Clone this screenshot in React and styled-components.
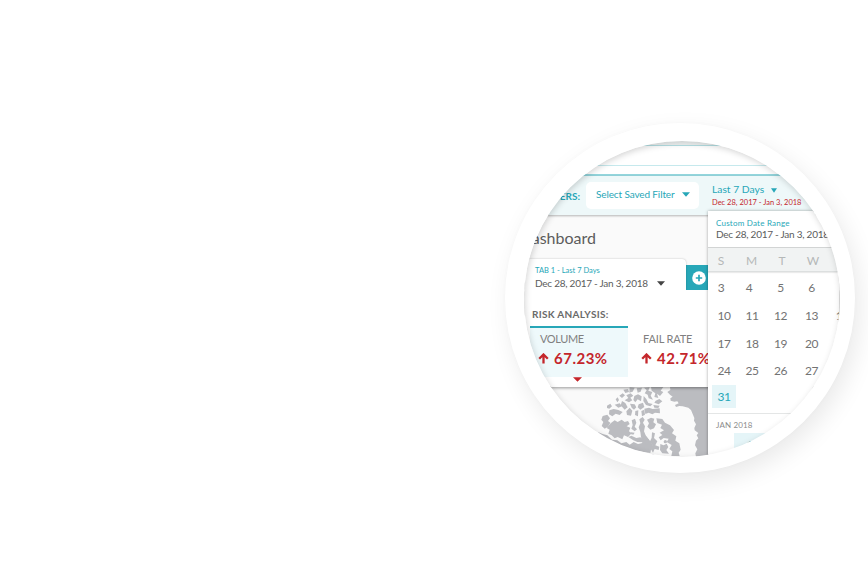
import React from "react";
import styled, { createGlobalStyle } from "styled-components";

const teal = "#27a7b8";
const red = "#c4262b";

const GlobalStyle = createGlobalStyle`
  * { box-sizing: border-box; }
  body { margin: 0; background: #fff; font-family: Lato, sans-serif; overflow: hidden; }
`;

const Page = styled.main`
  width: 868px;
  height: 567px;
  padding: 123px 0 0 505px;
  background: #fff;
  overflow: hidden;
`;

const Ring = styled.div`
  width: 350px;
  height: 350px;
  padding: 18px 0 0 19px;
  border-radius: 50%;
  background: #fff;
  box-shadow: 5px 9px 24px rgba(0, 0, 0, 0.085), 0 0 5px rgba(0, 0, 0, 0.02);
`;

const Lens = styled.div`
  position: relative;
  width: 316px;
  height: 316px;
  border-radius: 50%;
  overflow: hidden;
  background: #fafafa;
  &::after {
    content: "";
    position: absolute;
    inset: 0;
    border-radius: 50%;
    box-shadow: inset 1px 2px 6px rgba(0, 0, 0, 0.17);
  }
`;

const Text = styled.span`
  display: block;
  white-space: nowrap;
  font-size: ${(p) => p.$size}px;
  line-height: ${(p) => p.$line || 14}px;
  letter-spacing: ${(p) => p.$track || 0}px;
  font-weight: ${(p) => p.$weight || 400};
  color: ${(p) => p.$color || "#5c5c5c"};
`;

const BrowserEdge = styled.div`
  height: 5px;
  background: #eef2f2;
  border-bottom: 1px solid #b4dfe3;
`;

const NavStrip = styled.div`
  height: 20px;
  background: #fff;
  border-bottom: 1px solid #c6e9ed;
`;

const NavGap = styled.div`
  height: 10px;
  background: #fff;
  border-bottom: 2px solid #93d5dc;
`;

const FilterBar = styled.div`
  display: flex;
  height: 39px;
  background: #eef8f9;
  padding: 6px 0 0 13px;
  box-shadow: 0 1px 2px rgba(0, 0, 0, 0.28);
`;

const FiltersLabel = styled(Text)`
  display: flex;
  justify-content: flex-end;
  width: 43px;
  padding-top: 7px;
`;

const SavedFilter = styled.div`
  display: flex;
  align-items: center;
  justify-content: space-between;
  width: 113px;
  height: 27px;
  margin-left: 6px;
  padding: 0 9px 3px 10px;
  border-radius: 5px;
  background: #fff;
`;

const DateFilter = styled.div`
  padding: 0 0 0 13px;
`;

const DateFilterTop = styled.div`
  display: flex;
  align-items: center;
  gap: 7px;
  height: 14px;
  svg { margin-top: 2px; }
`;

const Heading = styled(Text)`
  width: 72px;
  height: 44px;
  padding-top: 12px;
  display: flex;
  justify-content: flex-end;
`;

const TabRow = styled.div`
  display: flex;
  align-items: flex-start;
  height: 31px;
`;

const Tab = styled.div`
  width: 162px;
  height: 31px;
  padding: 5px 0 0 11px;
  background: #fff;
  border-radius: 0 4px 0 0;
  box-shadow: 0 0 2px rgba(0, 0, 0, 0.25);
  clip-path: inset(-3px -3px 0 0);
`;

const TabRange = styled.div`
  display: flex;
  align-items: center;
  gap: 9px;
  height: 12px;
`;

const AddTab = styled.div`
  display: flex;
  align-items: center;
  justify-content: center;
  width: 26px;
  height: 25px;
  margin-top: 6px;
  background: ${teal};
`;

const RiskPanel = styled.section`
  position: relative;
  height: 97px;
  padding: 17px 0 0 6px;
  background: #fff;
  box-shadow: 0 1px 3px rgba(0, 0, 0, 0.4);
  clip-path: inset(0 0 -5px 0);
`;

const RiskTitle = styled(Text)`
  padding-left: 2px;
`;

const Metrics = styled.div`
  display: flex;
  margin-top: 5px;
`;

const Metric = styled.div`
  width: 98px;
  height: 51px;
  padding: 4px 0 0 ${(p) => (p.$active ? 10 : 15)}px;
  border-top: 2px solid ${(p) => (p.$active ? teal : "transparent")};
  background: ${(p) => (p.$active ? "#eef9fb" : "transparent")};
`;

const MetricValue = styled.div`
  display: flex;
  align-items: center;
  gap: 5px;
  height: 24px;
  margin-left: -2px;
`;

const MetricPointer = styled.div`
  height: 5px;
  margin-left: 43px;
  svg { display: block; }
`;

const MapArea = styled.div`
  height: 69px;
  padding-left: 56px;
  svg { display: block; }
`;

const Calendar = styled.aside`
  position: absolute;
  left: 184px;
  top: 70px;
  width: 131px;
  height: 250px;
  overflow: hidden;
  background: #fff;
  box-shadow: 0 0 3px rgba(0, 0, 0, 0.35);
`;

const CalendarHead = styled.div`
  height: 36px;
  padding: 5px 0 0 8px;
`;

const DayRow = styled.div`
  display: grid;
  grid-template-columns: ${(p) => p.$cols};
  align-items: center;
  justify-items: center;
  height: ${(p) => p.$height || 28}px;
  padding-left: 2px;
`;

const Weekdays = styled(DayRow)`
  padding-top: 2px;
  background: #f1f3f3;
  border-top: 1px solid #d2d4d4;
  border-bottom: 1px solid #dcdfdf;
  box-shadow: 0 1px 1px rgba(0, 0, 0, 0.08);
  margin-bottom: 2px;
`;

const SelectedDay = styled.div`
  display: flex;
  align-items: center;
  justify-content: center;
  width: ${(p) => p.$width || 24}px;
  height: 23px;
  margin-left: ${(p) => p.$left}px;
  background: #e5f5f8;
`;

const LastWeek = styled.div`
  height: 30px;
  padding-top: 1px;
  border-bottom: 1px solid #e4e6e6;
`;

const MonthLabel = styled(Text)`
  height: 19px;
  padding: 4px 0 0 8px;
`;

function Caret({ width = 8, color = teal }) {
  return (
    <svg width={width} height="5" viewBox="0 0 8 5" preserveAspectRatio="none" fill={color}>
      <path d="M0 0.3H8L4 4.7Z" />
    </svg>
  );
}

function Arrow() {
  return (
    <svg width="11" height="11" viewBox="0 0 11 11" fill="none" stroke={red} strokeWidth="2.3">
      <path d="M5.5 10.6V1.6M1.2 5.8L5.5 1.5L9.8 5.8" />
    </svg>
  );
}

function PlusCircle() {
  return (
    <svg width="14" height="14" viewBox="0 0 14 14">
      <circle cx="7" cy="7" r="6.8" fill="#fff" />
      <path d="M7 3.8V10.2M3.8 7H10.2" stroke={teal} strokeWidth="1.7" />
    </svg>
  );
}

function ArcticMap() {
  return (
    <svg width="128" height="70" viewBox="0 51 384 210" fill="#bbbcc0">
      <path d="M270 51H384V261H348L346 250L352 238L345 226L348 212L355 205L350 196L355 189L344 181L343 174L348 163L342 152L343 144L338 132L333 120L325 113L308 109L298 108L288 111L285 105L296 100L292 94L283 95L272 92L271 85L278 80L270 74L262 66L271 60Z" />
      <path d="M68 138L82 134L90 145L84 153L91 158L84 170L74 176L65 168L70 156L64 149Z" />
      <path d="M92 160L104 151L113 156L125 149L134 156L144 153L149 162L140 169L151 173L147 184L155 190L144 201L132 196L127 208L113 201L104 205L95 196L85 191L89 179L80 174Z" />
      <path d="M54 186L68 192L82 196L96 209L112 211L124 220L139 216L149 224L161 216L174 222L190 218L201 229L214 235L211 249L192 246L160 240L120 225L83 209L62 197Z" />
      <path d="M155 151L165 146L169 158L164 170L171 178L164 184L154 176L158 165Z" />
      <path d="M178 148L188 141L194 149L189 158L195 169L192 184L197 196L208 210L218 226L213 240L196 236L187 219L183 201L181 186L176 172L181 160Z" />
      <path d="M201 149L213 143L223 146L220 157L228 163L222 175L211 179L202 170L207 160Z" />
      <path d="M229 145L247 147L255 158L270 166L282 180L276 190L289 199L286 212L298 220L302 239L296 248L299 258L274 258L277 244L268 237L275 225L260 216L266 206L251 204L242 211L236 202L247 195L239 188L252 181L241 174L246 164L232 159Z" />
      <path d="M216 187L225 190L222 204L232 214L226 226L238 230L236 240L224 237L219 248L211 235L217 225L209 216L215 203Z" />
      <path d="M241 222L251 226L260 221L265 231L259 240L267 251L247 250L240 240Z" />
      <path d="M145 201L154 197L169 204L181 202L193 211L206 207L211 219L201 225L188 217L172 216L160 211Z" />
      <path d="M81 107L91 101L96 109L88 116L81 114ZM88 121L101 117L115 120L128 126L119 135L107 131L97 139L87 133ZM107 88L113 82L117 90L112 97ZM104 104L119 100L126 109L115 113ZM118 77L128 70L135 76L126 84ZM130 59L144 57L147 66L136 69ZM149 52L164 53L158 65L148 68ZM139 76L152 70L160 77L151 83L157 91L147 97L134 91L145 84ZM126 93L136 99L143 112L134 119L122 106ZM139 124L149 113L157 122L153 137L141 135ZM170 55L186 53L182 65L173 68ZM163 78L174 73L185 79L183 94L173 88L166 97L160 90ZM150 101L164 103L169 112L162 119L155 113ZM176 103L189 98L193 111L181 119L173 112ZM166 123L175 121L174 139L165 135ZM184 123L193 119L195 134L186 139Z" />
      <path d="M192 53L209 52L205 62L217 66L212 77L219 89L206 85L203 74L194 70L200 61ZM213 51L250 51L242 62L250 66L240 78L231 71L235 84L223 81L226 70L215 62ZM191 78L199 87L205 99L218 102L211 109L198 105L190 93ZM227 92L238 87L247 94L236 103L223 98ZM193 116L207 113L218 117L239 115L240 130L225 128L217 133L206 128L196 132ZM220 105L239 107L235 114L223 113ZM153 187L164 188L160 194L151 192ZM217 252L226 256L223 260L209 256Z" />
      <circle cx="256" cy="215" r="5" />
    </svg>
  );
}

const wideCols = "28px 28px 29px 33px 22px";
const weeks = [
  { cols: "22px 34px 29px 33px", days: [3, 4, 5, 6] },
  { cols: wideCols, days: [10, 11, 12, 13, 1] },
  { cols: wideCols, days: [17, 18, 19, 20], height: 27 },
  { cols: wideCols, days: [24, 25, 26, 27], height: 27 },
];

export default function App() {
  return (
    <Page>
      <GlobalStyle />
      <Ring>
        <Lens>
          <BrowserEdge />
          <NavStrip />
          <NavGap />
          <FilterBar>
            <FiltersLabel $size={10} $weight={700} $color={teal}>FILTERS:</FiltersLabel>
            <SavedFilter>
              <Text $size={10} $track={-0.12} $color={teal}>Select Saved Filter</Text>
              <Caret />
            </SavedFilter>
            <DateFilter>
              <DateFilterTop>
                <Text $size={10.3} $track={0} $color={teal}>Last 7 Days</Text>
                <Caret width={6} />
              </DateFilterTop>
              <Text $size={7.5} $line={13} $color={red}>Dec 28, 2017 - Jan 3, 2018</Text>
            </DateFilter>
          </FilterBar>
          <Heading $size={16} $line={22}>Dashboard</Heading>
          <TabRow>
            <Tab>
              <Text $size={7.5} $line={13} $color={teal}>TAB 1 - Last 7 Days</Text>
              <TabRange>
                <Text $size={10} $track={-0.25}>Dec 28, 2017 - Jan 3, 2018</Text>
                <Caret color="#444" />
              </TabRange>
            </Tab>
            <AddTab><PlusCircle /></AddTab>
          </TabRow>
          <RiskPanel>
            <RiskTitle $size={10} $track={0.3} $weight={700} $color="#6a6a6a">RISK ANALYSIS:</RiskTitle>
            <Metrics>
              <Metric $active>
                <Text $size={11} $track={-0.4} $color="#808080">VOLUME</Text>
                <MetricValue>
                  <Arrow />
                  <Text $size={15} $track={0.5} $line={20} $weight={700} $color={red}>67.23%</Text>
                </MetricValue>
              </Metric>
              <Metric>
                <Text $size={11} $track={-0.15} $color="#808080">FAIL RATE</Text>
                <MetricValue>
                  <Arrow />
                  <Text $size={15} $track={0.5} $line={20} $weight={700} $color={red}>42.71%</Text>
                </MetricValue>
              </Metric>
            </Metrics>
            <MetricPointer><Caret width={9} color={red} /></MetricPointer>
          </RiskPanel>
          <MapArea><ArcticMap /></MapArea>
          <Calendar>
            <CalendarHead>
              <Text $size={8} $track={0.22} $line={14} $color={teal}>Custom Date Range</Text>
              <Text $size={10} $track={-0.25} $line={9}>Dec 28, 2017 - Jan 3, 2018</Text>
            </CalendarHead>
            <Weekdays $cols="22px 39px 22px 40px" $height={25}>
              {["S", "M", "T", "W"].map((d) => (
                <Text key={d} $size={12} $color="#b5b8b8">{d}</Text>
              ))}
            </Weekdays>
            {weeks.map((w) => (
              <DayRow key={w.days[0]} $cols={w.cols} $height={w.height}>
                {w.days.map((d) => (
                  <Text key={d} $size={12} $track={-0.5} $color="#737373">{d}</Text>
                ))}
              </DayRow>
            ))}
            <LastWeek>
              <SelectedDay $left={4}><Text $size={12} $track={-0.5} $color={teal}>31</Text></SelectedDay>
            </LastWeek>
            <MonthLabel $size={8} $track={0.15} $color="#8c8c8c">JAN 2018</MonthLabel>
            <SelectedDay $left={26} $width={32}><Text $size={12} $color={teal}>1</Text></SelectedDay>
          </Calendar>
        </Lens>
      </Ring>
    </Page>
  );
}
